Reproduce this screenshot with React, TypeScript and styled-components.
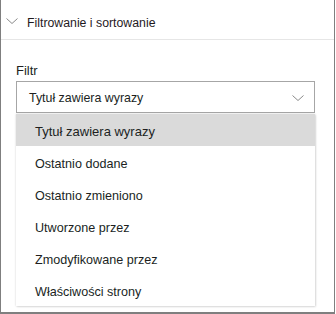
import React from "react";
import styled, { createGlobalStyle } from "styled-components";

const Global = createGlobalStyle`
  html, body { margin: 0; padding: 0; background: #ffffff; }
  body { font-family: "Segoe UI", "Liberation Sans", Arial, sans-serif; }
`;

const Frame = styled.div`
  box-sizing: border-box;
  width: 335px;
  height: 314px;
  border-left: 1px solid #7f7f7f;
  border-right: 1px solid #7f7f7f;
  border-bottom: 2px solid #7f7f7f;
  background: #fff;
  display: flex;
  flex-direction: column;
  overflow: hidden;
`;

const Header = styled.div`
  box-sizing: border-box;
  height: 40px;
  border-bottom: 1px solid #e6e6e6;
  display: flex;
  align-items: center;
  padding-left: 5px;
  gap: 9px;
  font-size: 12.3px;
  padding-top: 6px;
`;

const Icon = styled.span<{ $dy?: number }>`
  display: flex;
  margin-top: ${(p) => p.$dy ?? 0}px;
`;

const Title = styled.span`
  color: #1f1a1e;
`;

const Body = styled.div`
  padding: 22px 0 0 15px;
  display: flex;
  flex-direction: column;
`;

const Label = styled.div`
  font-size: 13px;
  color: #201f1e;
  line-height: 18px;
  height: 18px;
  margin-bottom: 1px;
`;

const Select = styled.div`
  box-sizing: border-box;
  width: 299px;
  height: 32px;
  border: 1px solid #a6a6a6;
  display: flex;
  align-items: center;
  justify-content: space-between;
  padding: 2px 10px 0 12px;
  font-size: 12.4px;
  color: #201f1e;
`;

const Menu = styled.div`
  box-sizing: border-box;
  width: 299px;
  margin-top: 1px;
  background: #fff;
  box-shadow: 0 0 2px rgba(0, 0, 0, 0.18), 1px 1px 2px rgba(0, 0, 0, 0.1);
  display: flex;
  flex-direction: column;
`;

const Item = styled.div<{ $active?: boolean }>`
  box-sizing: border-box;
  height: 32px;
  display: flex;
  align-items: center;
  padding: 3px 0 0 19px;
  font-size: ${(p) => (p.$active ? "13px" : "12.6px")};
  color: #201f1e;
  background: ${(p) => (p.$active ? "#dadada" : "transparent")};
`;

const Chevron = ({ w, h, color }: { w: number; h: number; color: string }) => (
  <svg width={w} height={h} viewBox={`0 0 ${w} ${h}`} fill="none">
    <path d={`M0.5 0.5 L${w / 2} ${h - 0.5} L${w - 0.5} 0.5`} stroke={color} strokeWidth="1" />
  </svg>
);

const items = [
  "Tytuł zawiera wyrazy",
  "Ostatnio dodane",
  "Ostatnio zmieniono",
  "Utworzone przez",
  "Zmodyfikowane przez",
  "Właściwości strony",
];

export default function App() {
  return (
    <>
      <Global />
      <Frame>
        <Header>
          <Icon $dy={-3}>
            <Chevron w={12} h={6} color="#8a8a8a" />
          </Icon>
          <Title>Filtrowanie i sortowanie</Title>
        </Header>
        <Body>
          <Label>Filtr</Label>
          <Select>
            <span>Tytuł zawiera wyrazy</span>
            <Icon $dy={-1}>
              <Chevron w={12} h={6} color="#8a8a8a" />
            </Icon>
          </Select>
          <Menu>
            {items.map((t, i) => (
              <Item key={t} $active={i === 0}>
                {t}
              </Item>
            ))}
          </Menu>
        </Body>
      </Frame>
    </>
  );
}
